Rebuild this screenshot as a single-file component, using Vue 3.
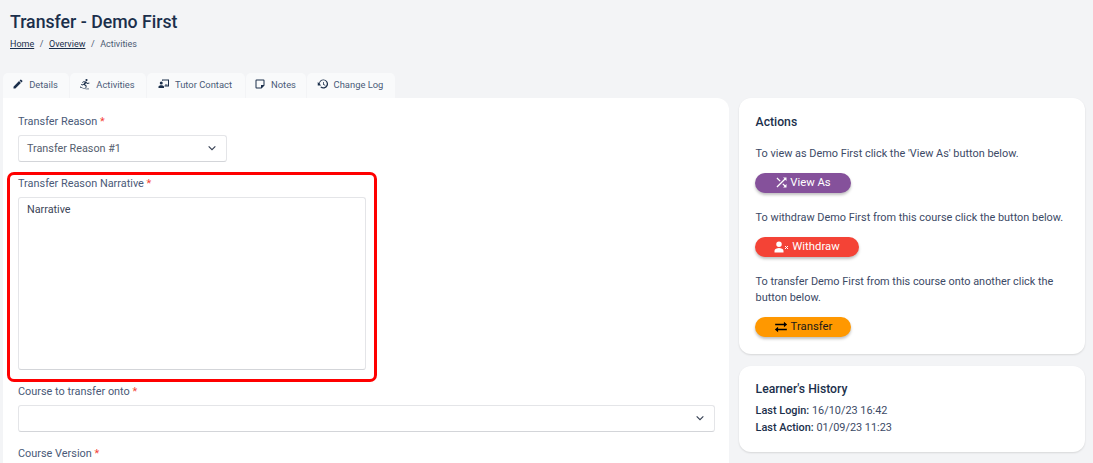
<script setup>
const tabs = [
  { label: 'Details', icon: 'pencil', w: 66 },
  { label: 'Activities', icon: 'run', w: 76 },
  { label: 'Tutor Contact', icon: 'tutor', w: 98 },
  { label: 'Notes', icon: 'note', w: 60 },
  { label: 'Change Log', icon: 'history', w: 88 },
]
</script>

<template>
  <div class="page">
    <header class="head">
      <h1>Transfer - Demo First</h1>
      <nav class="crumbs">
        <a>Home</a><span class="sep">/</span><a>Overview</a><span class="sep">/</span><span>Activities</span>
      </nav>
    </header>

    <div class="tabs">
      <div v-for="t in tabs" :key="t.label" class="tab" :style="{ width: t.w + 'px' }">
        <svg class="ti" viewBox="0 0 24 24" fill="currentColor">
          <path v-if="t.icon === 'pencil'" d="M3 17.25V21h3.75L17.81 9.94l-3.75-3.75L3 17.25zM20.71 7.04a1 1 0 0 0 0-1.41l-2.34-2.34a1 1 0 0 0-1.41 0l-1.83 1.83 3.75 3.75 1.83-1.83z" />
          <path v-else-if="t.icon === 'run'" d="M15 2a2.200 2.200 0 1 1 0 4.400A2.200 2.200 0 0 1 15 2zM9 6.500l5 .5 3 3 3.500-.8.400 1.600-4.700 1.100-2-1.800-2 2.700 3.300 2.600-1 4.600h-1.800l.7-3.700-4-2.700-2.500 1.500-3-1.500.8-1.400 2.200 1 2.500-1.700 2-3.200-2-.2-2 2-1.200-1.200zM2 16l1 1.700 4 2 7.500 2 5-.5.500 1.300H14L2 19z" />
          <path v-else-if="t.icon === 'tutor'" d="M8 5.500V3h14v14h-9v-2h7V5H10v.5zM6.500 7a3 3 0 1 1 0 6 3 3 0 0 1 0-6zM1 20v-2.500C1 15.500 4 14.500 6.500 14.500S12 15.500 12 17.500V20zM14 14.500V13h5v1.500z" />
          <path v-else-if="t.icon === 'note'" d="M19 3H5a2 2 0 0 0-2 2v14a2 2 0 0 0 2 2h10l6-6V5a2 2 0 0 0-2-2zM5 19V5h14v9h-5v5H5z" />
          <path v-else d="M13 3a9 9 0 0 0-8.900 7.700L1.500 8v7h7l-3-3A7 7 0 1 1 8.100 17l-1.400 1.400A9 9 0 1 0 13 3zm-1 5v5l4.300 2.500.7-1.200-3.500-2.100V8z" />
        </svg>
        <span>{{ t.label }}</span>
      </div>
    </div>

    <div class="columns">
      <main class="card form">
        <div class="field first">
          <label>Transfer Reason <i>*</i></label>
          <div class="select short">
            <span>Transfer Reason #1</span>
            <svg class="chev" viewBox="0 0 12 12"><path d="M2 4l4 4 4-4" fill="none" stroke="currentColor" stroke-width="1.300" /></svg>
          </div>
        </div>
        <div class="field narrative">
          <div class="highlight"></div>
          <label>Transfer Reason Narrative <i>*</i></label>
          <div class="textarea">Narrative</div>
        </div>
        <div class="field course">
          <label>Course to transfer onto <i>*</i></label>
          <div class="select">
            <span></span>
            <svg class="chev" viewBox="0 0 12 12"><path d="M2 4l4 4 4-4" fill="none" stroke="currentColor" stroke-width="1.300" /></svg>
          </div>
        </div>
        <div class="field version">
          <label>Course Version <i>*</i></label>
        </div>
      </main>

      <aside class="side">
        <section class="card actions">
          <h2>Actions</h2>
          <p class="p1">To view as Demo First click the 'View As' button below.</p>
          <button class="btn purple">
            <svg class="bi shuffle" viewBox="0 0 24 24" fill="currentColor"><path d="M10.590 9.170 5.410 4 4 5.410l5.170 5.170 1.420-1.410zM14.500 4l2.040 2.040L4 18.590 5.410 20 17.960 7.460 20 9.500V4h-5.500zm.33 9.410-1.410 1.410 3.130 3.130L14.500 20H20v-5.500l-2.040 2.040-3.130-3.130z" /></svg>
            View As
          </button>
          <p class="p2">To withdraw Demo First from this course click the button below.</p>
          <button class="btn red">
            <svg class="bi wide" viewBox="0 0 30 24" fill="currentColor"><path d="M10 12a5.500 5.500 0 1 0 0-11 5.500 5.500 0 0 0 0 11zm0 2c-4 0-9 2-9 5.500V23h18v-3.500C19 16 14 14 10 14z" /><path d="M22 10l6 6M28 10l-6 6" stroke="currentColor" stroke-width="2" fill="none" /></svg>
            Withdraw
          </button>
          <p class="p2">To transfer Demo First from this course onto another click the button below.</p>
          <button class="btn orange">
            <svg class="bi swap" viewBox="0 0 24 24" fill="currentColor"><path d="M7 21v-3.500h15V15H7v-3.500L1.500 16.250zM17 3v3.500H2V9h15v3.500l5.500-4.750z" /></svg>
            Transfer
          </button>
        </section>
        <section class="card history">
          <h2>Learner's History</h2>
          <p><b>Last Login:</b> 16/10/23 16:42</p>
          <p><b>Last Action:</b> 01/09/23 11:23</p>
        </section>
      </aside>
    </div>
  </div>
</template>

<style>
html, body { margin: 0; background: #f3f4f6; overflow: hidden; }
</style>

<style scoped>
.page {
  height: 463px;
  overflow: hidden;
  background: #f3f4f6;
  font-family: Roboto, "Liberation Sans", sans-serif;
  color: #1f2f4d;
  box-sizing: border-box;
}
.head { padding: 11px 0 0 10px; height: 62px; box-sizing: border-box; }
h1 { margin: 0; font-size: 17.700px; line-height: 22px; font-weight: 500; color: #1b2f4b; }
.crumbs { margin-top: 5px; font-size: 9px; line-height: 12px; color: #4b5a73; }
.crumbs a { color: #1b2f4b; text-decoration: underline; }
.sep { margin: 0 5.500px; }
.tabs { display: flex; gap: 1px; padding-left: 3px; margin-top: 11px; height: 25px; }
.tab {
  box-sizing: border-box;
  display: flex;
  align-items: center;
  justify-content: center;
  gap: 5px;
  padding: 0 2px 3px 0;
  background: #f9fafb;
  border-radius: 5px 5px 0 0;
  font-size: 9.400px;
  color: #4a5a78;
}
.ti { width: 12px; height: 12px; color: #1b2f4b; flex: none; }
.columns { display: flex; align-items: flex-start; padding-left: 3px; }
.card { background: #fff; box-sizing: border-box; }
.form {
  width: 726px;
  height: 400px;
  padding: 0 14px 0 15px;
  border-radius: 0 12px 0 0;
}
.field { position: relative; }
label { display: block; font-size: 10.900px; line-height: 16px; color: #4a5a78; }
label i { font-style: normal; color: #f44336; }
.first { padding-top: 16px; }
.select {
  box-sizing: border-box;
  height: 27px;
  margin-top: 5px;
  border: 1px solid #e4e5e8;
  border-bottom-color: #d3d5d9;
  border-radius: 3px;
  display: flex;
  align-items: center;
  justify-content: space-between;
  padding: 0 9px 1px 8px;
  font-size: 10.800px;
  color: #555e6e;
}
.short { width: 209px; }
.chev { width: 10px; height: 10px; color: #333d50; }
.narrative { margin-top: 14px; }
.textarea {
  box-sizing: border-box;
  width: 348px;
  height: 173px;
  margin-top: 5px;
  border: 1px solid #e4e5e8;
  border-bottom-color: #d3d5d9;
  border-radius: 3px;
  padding: 5px 8px;
  font-size: 10.800px;
  line-height: 14px;
  color: #3c4658;
}
.highlight {
  position: absolute;
  left: -11px;
  top: -4px;
  width: 370px;
  height: 210px;
  box-sizing: border-box;
  border: 3px solid #f00;
  border-radius: 7px;
}
.course { margin-top: 14px; }
.version { margin-top: 14px; }
.side { margin-left: 10px; width: 346px; display: flex; flex-direction: column; gap: 12px; }
.side .card { border-radius: 12px; box-shadow: 0 1px 2px rgba(0, 0, 0, 0.12); padding: 0 16px; }
.actions { height: 256px; padding-top: 17px !important; }
h2 { margin: 0 0 0 0.600px; font-size: 12.200px; line-height: 15px; font-weight: 500; color: #1b2f4b; }
p { margin: 0 0 0 0.600px; font-size: 10.900px; line-height: 16px; color: #3c4a66; }
.p1 { margin-top: 16px; }
.p2 { margin-top: 17px; }
.btn {
  display: flex;
  align-items: center;
  justify-content: center;
  gap: 3px;
  height: 20px;
  margin-top: 11px;
  padding: 0 0 1px;
  border: 0;
  border-radius: 10px;
  font: 400 11.300px Roboto, sans-serif;
  color: #fff;
  box-shadow: 0 2px 3px rgba(0, 0, 0, 0.25);
}
.purple { width: 96px; background: #85519b; }
.red { width: 104px; background: #f44336; }
.orange { width: 96px; background: #ff9800; color: #1a1a1a; }
.bi { width: 12px; height: 12px; }
.bi.shuffle { width: 15px; height: 15px; margin: 0 -1.500px; }
.bi.swap { width: 14px; height: 14px; color: #000; }
.bi.wide { width: 15px; }
.history { height: 86px; padding-top: 16px !important; }
.history p { line-height: 16.500px; }
.history h2 + p { margin-top: 6px; }
.history b { font-weight: 500; color: #1b2f4b; }
</style>
